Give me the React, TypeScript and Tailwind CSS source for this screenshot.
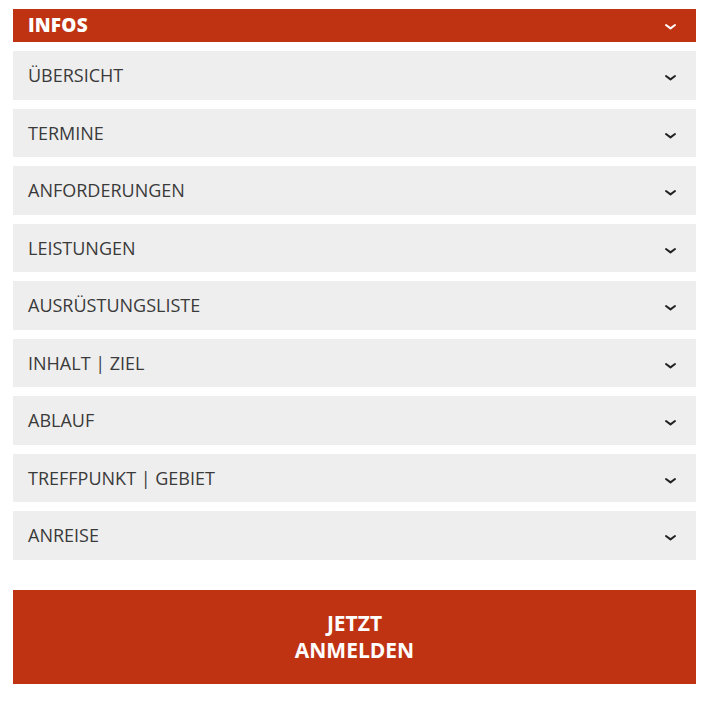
import React from 'react';

const items = [
  'ÜBERSICHT',
  'TERMINE',
  'ANFORDERUNGEN',
  'LEISTUNGEN',
  'AUSRÜSTUNGSLISTE',
  'INHALT | ZIEL',
  'ABLAUF',
  'TREFFPUNKT | GEBIET',
  'ANREISE',
];

const Chevron: React.FC<{ className?: string }> = ({ className }) => (
  <svg width="13" height="8" viewBox="0 0 13 8" className={className}>
    <path d="M2 2 L6.5 5.4 L11 2" fill="none" stroke="currentColor" strokeWidth="2" strokeLinecap="round" strokeLinejoin="round" />
  </svg>
);

const App: React.FC = () => {
  return (
    <div className="w-[727px] h-[711px] bg-white font-['Open_Sans',sans-serif] px-[13px] pt-[9px]">
      <div className="w-[683px]">
        <div className="h-[33px] bg-[#bf3313] flex items-center justify-between pl-[15px] pr-[19px]">
          <span className="text-white font-extrabold text-[19px] tracking-[0.2px]">INFOS</span>
          <Chevron className="text-white mt-[2px]" />
        </div>
        {items.map((label) => (
          <div key={label} className="mt-[9px] h-[48.5px] bg-[#eeeeee] flex items-center justify-between pl-[15px] pr-[19px]">
            <span className="text-[#3a3a3a] text-[18px] font-normal pt-[1px]">{label}</span>
            <Chevron className="text-[#222222] mt-[6px]" />
          </div>
        ))}
        <button className="mt-[30px] w-full h-[94px] bg-[#bf3313] text-white font-bold text-[21px] leading-[27px] flex flex-col items-center justify-center">
          <span>JETZT</span>
          <span>ANMELDEN</span>
        </button>
      </div>
    </div>
  );
};

export default App;
